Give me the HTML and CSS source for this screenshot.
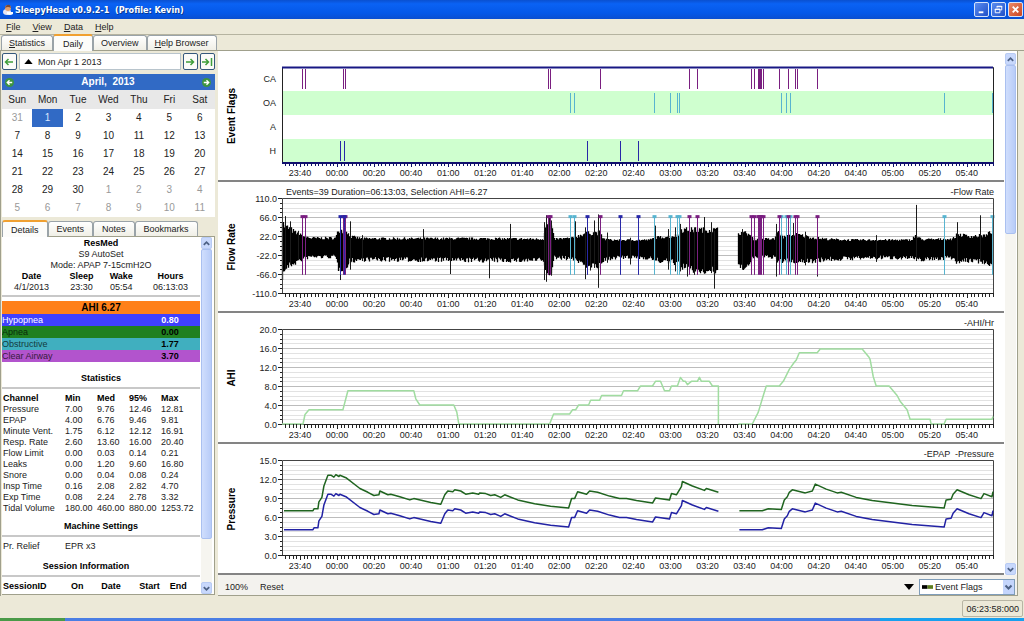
FILE: index.html
```html
<!DOCTYPE html>
<html lang="en">
<head>
    <meta charset="UTF-8">
    <meta name="viewport" content="width=device-width, initial-scale=1.0">
    <title>SleepyHead v0.9.2-1</title>
    <link rel="stylesheet" href="styles.css">
</head>
<body>
    <header class="titlebar">
        <svg class="app-icon" viewBox="0 0 12 12">
            <ellipse cx="5" cy="8" rx="4" ry="3" fill="#e8e4f0"/>
            <circle cx="6" cy="4" r="3" fill="#e0a070"/>
            <path d="M3 4 Q4 0 8 1 L9 4 Q6 2 3 4Z" fill="#7a4a38"/>
            <path d="M5 8h6v2q-3 2-6 0z" fill="#fff"/>
        </svg>
        <h1>SleepyHead v0.9.2-1 &nbsp;(Profile: Kevin)</h1>
        <div class="window-buttons">
            <button class="win-btn" aria-label="Minimize"><svg viewBox="0 0 14 14"><path d="M4 10h5" stroke="#fff" stroke-width="2"/></svg></button>
            <button class="win-btn" aria-label="Restore"><svg viewBox="0 0 14 14" fill="none" stroke="#fff"><path d="M5.5 5V3.500h5v4H9M5 4h6"/><path d="M3.500 6.500h5v4h-5zM3 7h6"/></svg></button>
            <button class="win-btn close" aria-label="Close"><svg viewBox="0 0 14 14"><path d="M4 4l6 6M10 4l-6 6" stroke="#fff" stroke-width="2"/></svg></button>
        </div>
    </header>

    <nav class="menubar">
        <button><u>F</u>ile</button>
        <button><u>V</u>iew</button>
        <button><u>D</u>ata</button>
        <button><u>H</u>elp</button>
    </nav>

    <div class="tabs main-tabs">
        <button class="tab"><u>S</u>tatistics</button>
        <button class="tab active">Daily</button>
        <button class="tab">Overview</button>
        <button class="tab"><u>H</u>elp Browser</button>
    </div>

    <div class="workspace">
        <aside class="sidebar">
            <div class="date-nav">
                <button class="nav-btn" aria-label="Previous day"><svg viewBox="0 0 12 12"><path d="M10 6H3M5.500 3L2.500 6l3 3" fill="none" stroke="#3f9e3a" stroke-width="1.500"/></svg></button>
                <button class="date-btn"><svg viewBox="0 0 10 6"><path d="M0 6L5 0l5 6z"/></svg>Mon Apr 1 2013</button>
                <button class="nav-btn" aria-label="Next day"><svg viewBox="0 0 12 12"><path d="M2 6h7M6.500 3l3 3-3 3" fill="none" stroke="#3f9e3a" stroke-width="1.500"/></svg></button>
                <button class="nav-btn" aria-label="Last day"><svg viewBox="0 0 12 12"><path d="M1 6h6M4.500 3l3 3-3 3M10.500 2v8" fill="none" stroke="#3f9e3a" stroke-width="1.500"/></svg></button>
            </div>

            <div class="calendar-head">
                <button aria-label="Previous month"><svg viewBox="0 0 10 10"><circle cx="5" cy="5" r="5" fill="#3d9440"/><path d="M8 5H3M5 2.500L2.500 5 5 7.500" fill="none" stroke="#fff" stroke-width="1.500"/></svg></button>
                <span>April, &nbsp;2013</span>
                <button aria-label="Next month"><svg viewBox="0 0 10 10"><circle cx="5" cy="5" r="5" fill="#3d9440"/><path d="M2 5h5M5 2.500L7.500 5 5 7.500" fill="none" stroke="#fff" stroke-width="1.500"/></svg></button>
            </div>
            <table class="calendar">
                <thead>
                    <tr><th>Sun</th><th>Mon</th><th>Tue</th><th>Wed</th><th>Thu</th><th>Fri</th><th>Sat</th></tr>
                </thead>
                <tbody>
                    <tr><td class="other">31</td><td class="selected">1</td><td>2</td><td>3</td><td>4</td><td>5</td><td>6</td></tr>
                    <tr><td>7</td><td>8</td><td>9</td><td>10</td><td>11</td><td>12</td><td>13</td></tr>
                    <tr><td>14</td><td>15</td><td>16</td><td>17</td><td>18</td><td>19</td><td>20</td></tr>
                    <tr><td>21</td><td>22</td><td>23</td><td>24</td><td>25</td><td>26</td><td>27</td></tr>
                    <tr><td>28</td><td>29</td><td>30</td><td class="other">1</td><td class="other">2</td><td class="other">3</td><td class="other">4</td></tr>
                    <tr><td class="other">5</td><td class="other">6</td><td class="other">7</td><td class="other">8</td><td class="other">9</td><td class="other">10</td><td class="other">11</td></tr>
                </tbody>
            </table>

            <div class="tabs detail-tabs">
                <button class="tab active">Details</button>
                <button class="tab">Events</button>
                <button class="tab">Notes</button>
                <button class="tab">Bookmarks</button>
            </div>
            <div class="details">
                <div class="details-body">
                    <div class="machine">
                        <b>ResMed</b>
                        <span>S9 AutoSet</span>
                        <span>Mode: APAP 7-15cmH2O</span>
                    </div>
                    <table class="night">
                        <tr><th>Date</th><th>Sleep</th><th>Wake</th><th>Hours</th></tr>
                        <tr><td>4/1/2013</td><td>23:30</td><td>05:54</td><td>06:13:03</td></tr>
                    </table>
                    <hr>
                    <div class="ahi">AHI 6.27</div>
                    <table class="indices">
                        <tr class="hypopnea"><td>Hypopnea</td><th>0.80</th></tr>
                        <tr class="apnea"><td>Apnea</td><th>0.00</th></tr>
                        <tr class="obstructive"><td>Obstructive</td><th>1.77</th></tr>
                        <tr class="clear-airway"><td>Clear Airway</td><th>3.70</th></tr>
                    </table>

                    <h2 class="first">Statistics</h2>
                    <hr>
                    <table class="stats">
                        <tr><th>Channel</th><th>Min</th><th>Med</th><th>95%</th><th>Max</th></tr>
                        <tr><td>Pressure</td><td>7.00</td><td>9.76</td><td>12.46</td><td>12.81</td></tr>
                        <tr><td>EPAP</td><td>4.00</td><td>6.76</td><td>9.46</td><td>9.81</td></tr>
                        <tr><td>Minute Vent.</td><td>1.75</td><td>6.12</td><td>12.12</td><td>16.91</td></tr>
                        <tr><td>Resp. Rate</td><td>2.60</td><td>13.60</td><td>16.00</td><td>20.40</td></tr>
                        <tr><td>Flow Limit</td><td>0.00</td><td>0.03</td><td>0.14</td><td>0.21</td></tr>
                        <tr><td>Leaks</td><td>0.00</td><td>1.20</td><td>9.60</td><td>16.80</td></tr>
                        <tr><td>Snore</td><td>0.00</td><td>0.04</td><td>0.08</td><td>0.24</td></tr>
                        <tr><td>Insp Time</td><td>0.16</td><td>2.08</td><td>2.82</td><td>4.70</td></tr>
                        <tr><td>Exp Time</td><td>0.08</td><td>2.24</td><td>2.78</td><td>3.32</td></tr>
                        <tr><td>Tidal Volume</td><td>180.00</td><td>460.00</td><td>880.00</td><td>1253.72</td></tr>
                    </table>

                    <h2>Machine Settings</h2>
                    <hr>
                    <table class="stats">
                        <tr><td>Pr. Relief</td><td>EPR x3</td></tr>
                    </table>

                    <h2 class="sessions-title">Session Information</h2>
                    <hr>
                    <table class="sessions">
                        <tr><th>SessionID</th><th>On</th><th>Date</th><th>Start</th><th>End</th></tr>
                    </table>
                </div>
                <div class="scrollbar">
                    <button aria-label="Scroll up"><svg viewBox="0 0 10 10"><path d="M2 6.500L5 3.500l3 3" fill="none" stroke="#4d6185" stroke-width="2"/></svg></button>
                    <div class="track"><div class="thumb details-thumb"></div></div>
                    <button aria-label="Scroll down"><svg viewBox="0 0 10 10"><path d="M2 3.500L5 6.500l3-3" fill="none" stroke="#4d6185" stroke-width="2"/></svg></button>
                </div>
            </div>
        </aside>

        <main class="graphs">
            <div class="graph-area">
                <div class="graph-list">
                    <svg class="graph" id="eventFlags"></svg>
                    <svg class="graph" id="flowRate"></svg>
                    <svg class="graph" id="ahi"></svg>
                    <svg class="graph" id="pressure"></svg>
                </div>
                <div class="scrollbar">
                    <button aria-label="Scroll up"><svg viewBox="0 0 10 10"><path d="M2 6.500L5 3.500l3 3" fill="none" stroke="#4d6185" stroke-width="2"/></svg></button>
                    <div class="track"><div class="thumb graphs-thumb"></div></div>
                    <button aria-label="Scroll down"><svg viewBox="0 0 10 10"><path d="M2 3.500L5 6.500l3-3" fill="none" stroke="#4d6185" stroke-width="2"/></svg></button>
                </div>
            </div>
            <div class="graph-toolbar">
                <button>100%</button>
                <button>Reset</button>
                <button class="drop" aria-label="Graph list"><svg viewBox="0 0 10 6"><path d="M0 0h10L5 6z"/></svg></button>
                <div class="graph-select">
                    <svg class="swatch" viewBox="0 0 12 4"><path d="M0 0h6v4H0z"/><path d="M6 0h6v4H6z" fill="#5d7d1e"/></svg>
                    <select aria-label="Visible graph"><option>Event Flags</option></select>
                    <svg class="arrow" viewBox="0 0 10 14"><path d="M2 5.500l3 3 3-3" fill="none" stroke="#4d6185" stroke-width="2"/></svg>
                </div>
            </div>
        </main>
    </div>

    <footer class="statusbar"><span class="clock">06:23:58:000</span></footer>
    <div class="taskbar"><span class="start"></span><span class="tray"></span></div>

    <script src="graphs.js"></script>
</body>
</html>
```
FILE: styles.css
```css
* { box-sizing: border-box; }
body {
    margin: 0;
    height: 100vh;
    display: flex;
    flex-direction: column;
    overflow: hidden;
    background-color: #ece9d8;
    color: #222;
    font-family: "Liberation Sans", Arial, sans-serif;
    font-size: 9px;
    line-height: 12px;
}
button { font: inherit; color: inherit; background: none; border: none; padding: 0; }
svg { display: block; }
table { border-collapse: collapse; width: 100%; }
th, td { padding: 0; }

/* window frame */
.titlebar {
    flex: none;
    height: 19px;
    display: flex;
    align-items: center;
    padding: 0 1px 0 2px;
    background: linear-gradient(#0a50d0, #0a62f4 20%, #0458e8 70%, #0a4fd0);
    color: #fff;
}
.app-icon { width: 12px; height: 12px; margin-right: 1px; }
.titlebar h1 {
    margin: 0;
    flex: 1;
    font-family: "DejaVu Sans Condensed", "DejaVu Sans", sans-serif;
    font-size: 9px;
    text-shadow: 1px 1px 0 #0a3a90;
}
.window-buttons { display: flex; gap: 2px; }
.win-btn { width: 15px; height: 15px; border: 1px solid #d5e3fa; border-radius: 2px; background: linear-gradient(135deg, #5a8cf0, #1f50c8); }
.win-btn.close { background: linear-gradient(135deg, #ec8a68, #cc4520); }

.menubar { flex: none; height: 16px; display: flex; gap: 12px; padding-left: 6px; border-bottom: 1px solid #b5b3a0; }

/* tabs */
.tabs { flex: none; display: flex; align-items: flex-end; padding-left: 1px; border-bottom: 1px solid #a0a08c; }
.tab { height: 15px; padding: 0 7px; border: 1px solid #9aa3a8; border-bottom: none; border-radius: 3px 3px 0 0; background: linear-gradient(#fff, #f0efe6); }
.tab.active { height: 17px; margin-bottom: -1px; background: #fcfcfa; border-top: 2px solid #f0a030; }
.main-tabs { height: 16px; }
.main-tabs .tab { padding: 0 7px; }
.main-tabs .tab.active { padding: 0 9px; }

.workspace { flex: 1; min-height: 0; display: flex; padding-right: 6px; }

/* sidebar */
.sidebar { flex: none; width: 218px; display: flex; flex-direction: column; border-left: 1px solid #a0a08c; padding: 2px 3px 1px 1px; }
.date-nav { display: flex; gap: 2px; height: 17px; }
.nav-btn { width: 15px; border: 1px solid #35587c; border-radius: 2px; background: #fbfbf8; }
.nav-btn svg { width: 12px; }
.date-btn { flex: 1; display: flex; align-items: center; gap: 5px; padding-left: 4px; border: 1px solid #b8c4cc; background: #fff; }
.date-btn svg { width: 9px; height: 5px; }
.calendar-head { display: flex; align-items: center; justify-content: space-between; height: 16px; margin-top: 4px; padding: 0 4px 0 3px; background: #316ac5; color: #fff; font-size: 10px; font-weight: bold; }
.calendar-head svg { width: 9px; height: 9px; }
.calendar { table-layout: fixed; background: #fff; text-align: center; font-size: 10px; }
.calendar th { height: 19px; background: #e8e8e8; font-weight: normal; }
.calendar td { height: 18px; }
.calendar .other { color: #999; }
.calendar .selected { background: #316ac5; color: #dbe6ff; }

.detail-tabs { height: 17px; margin-top: 3px; padding-left: 0; }
.detail-tabs .tab { padding: 0 8px; }
.details { flex: 1; min-height: 0; display: flex; border: 1px solid #a0a08c; border-width: 0 1px 1px 0; background: #fff; padding-right: 2px; }
.details-body { flex: 1; min-width: 0; overflow: hidden; padding: 1px 1px 0 0; line-height: 11px; }
.details hr { margin: 0; border: none; height: 2px; background: #c8c8c8; }
.details b, .details th, .details h2, .ahi { color: #000; }
.machine { display: flex; flex-direction: column; align-items: center; }
.night { text-align: center; margin-bottom: 2px; }
.ahi { margin-top: 4px; height: 13px; line-height: 13px; background: #ff8019; text-align: center; font-size: 10px; font-weight: bold; }
.indices { line-height: 12px; }
.indices th { width: 60px; }
.indices .hypopnea, .indices .hypopnea th { background: #4040ff; color: #fff; }
.apnea { background: #208020; color: #0a2a0a; }
.obstructive { background: #40afbf; color: #143a40; }
.clear-airway { background: #b254cd; color: #381a40; }
.details h2 { margin: 7px 0 3px; font-size: 9px; text-align: center; }
.details h2.first { margin-top: 11px; }
.details h2.sessions-title { padding-right: 30px; margin-top: 9px; }
.stats, .sessions { margin-top: 4px; table-layout: fixed; text-align: left; }
.stats tr > :nth-child(1) { width: 62px; }
.stats td, .stats th { padding-left: 1px; white-space: nowrap; }
.stats tr > :nth-child(5) { width: 40px; }
.sessions tr > :nth-child(1) { width: 69px; padding-left: 1px; }
.sessions tr > :nth-child(3) { width: 38px; }

/* scrollbars */
.scrollbar { flex: none; width: 11px; display: flex; flex-direction: column; background: #f6f5f0; }
.scrollbar button { flex: none; height: 12px; border: 1px solid #b8cbf4; border-radius: 2px; background: #c8d8fc; }
.track { flex: 1; min-height: 0; }
.thumb { border: 1px solid #aac0f0; border-radius: 2px; background: linear-gradient(90deg, #d0defd, #b8ccf8); }
.details-thumb { height: 87%; }
.graphs-thumb { height: 34%; }

/* graphs */
.graphs { flex: 1; min-width: 0; display: flex; flex-direction: column; background: #fff; border: 1px solid #a0a08c; border-width: 0 1px 1px 0; }
.graph-area { flex: 1; min-height: 0; display: flex; padding-right: 1px; }
.graph-list { flex: 1; min-width: 0; overflow: hidden; }
.graph-area .scrollbar { margin: 2px 0 0 1px; }
.graph { width: 100%; height: 131px; border-bottom: 2px solid #848484; }
.graph text { font-size: 10px; fill: #222; }
.graph .tick { font-size: 9px; }
.graph .name { font-weight: bold; fill: #000; text-anchor: middle; }
.graph .end { text-anchor: end; }
.graph .mid { text-anchor: middle; }
.graph-toolbar { flex: none; height: 20px; display: flex; align-items: center; gap: 12px; padding: 3px 2px 0 7px; background: #f3f2ee; }
.drop { margin-left: auto; }
.drop svg { width: 10px; height: 6px; }
.graph-select { position: relative; width: 96px; margin-left: -7px; }
.graph-select select { appearance: none; display: block; width: 100%; height: 16px; padding: 0 15px; border: 1px solid #7f9db9; border-radius: 0; background: #fff; color: inherit; font: inherit; }
.graph-select svg { position: absolute; pointer-events: none; }
.graph-select .swatch { left: 3px; top: 6px; width: 11px; height: 4px; }
.graph-select .arrow { right: 1px; top: 1px; width: 11px; height: 14px; background: #c4d5fc; }

.statusbar { flex: none; height: 22px; display: flex; justify-content: flex-end; align-items: center; padding: 3px 1px 0 0; }
.clock { padding: 2px 3px 1px; border: 1px solid #b8b5a4; border-radius: 2px; }
.taskbar { flex: none; height: 3px; display: flex; justify-content: space-between; background: #4a7ee4; }
.taskbar .start { width: 65px; background: #4a9a48; }
.taskbar .tray { width: 144px; background: #18a0ee; }
```
FILE: graphs.js
```js
const NS = 'http://www.w3.org/2000/svg';
const LEFT = 64, RIGHT = 11, TOP = 16, BOTTOM = 111;
const SPAN = 712; // length of the night in data units

const COLORS = { CA: '#7a1f80', OA: '#58b4d0', H: '#2828a8' };
const events = {
    CA: [21, 24, 62, 64, 267, 269, 319, 408, 416, 470, 473, 477, 478, 479, 480, 482, 498, 507, 514, 516, 536],
    OA: [289, 293, 373, 389, 396, 398, 500, 505, 509, 663, 711],
    H: [59, 63, 306, 339, 357]
};

function add(svg, tag, attrs, text) {
    const el = document.createElementNS(NS, tag);
    for (const k in attrs) el.setAttribute(k, attrs[k]);
    if (text !== undefined) el.textContent = text;
    svg.appendChild(el);
    return el;
}

function px(svg, u) {
    return LEFT + u / SPAN * (svg.clientWidth - LEFT - RIGHT);
}

function line(svg, x1, y1, x2, y2, stroke, width) {
    add(svg, 'path', { d: `M${x1} ${y1}L${x2} ${y2}`, stroke, 'stroke-width': width || 1, fill: 'none' });
}

function timeAxis(svg, color) {
    let d = '';
    for (let i = -4; i <= 187; i++) {
        const x = Math.round(px(svg, 18 + i * 3.71)) + 0.5;
        d += `M${x} ${BOTTOM}v${i % 10 === 0 ? 5 : 4}`;
    }
    add(svg, 'path', { d, stroke: color, fill: 'none' });
    for (let i = 0; i < 19; i++) {
        const min = (23 * 60 + 40 + i * 20) % 1440;
        const label = String(Math.floor(min / 60)).padStart(2, '0') + ':' + String(min % 60).padStart(2, '0');
        add(svg, 'text', { x: px(svg, 18 + i * 37.1), y: 125, class: 'tick mid' }, label);
    }
}

function name(svg, text) {
    add(svg, 'text', { transform: 'translate(17 65) rotate(-90)', class: 'name' }, text);
}

function valueAxis(svg, min, max, minor, major, legend) {
    const y = v => BOTTOM - (v - min) / (max - min) * (BOTTOM - TOP);
    const right = px(svg, SPAN);
    for (let i = 0; i <= minor * major; i++) {
        const yy = Math.round(TOP + i * (BOTTOM - TOP) / (minor * major)) + 0.5;
        const big = i % minor === 0;
        line(svg, LEFT, yy, right, yy, big ? '#bcbcbc' : '#e2e2e2');
        line(svg, LEFT - (big ? 4 : 2), yy, LEFT, yy, '#222');
        if (big) {
            const v = max - (max - min) * i / (minor * major);
            add(svg, 'text', { x: LEFT - 5, y: yy + 3, class: 'tick end' }, v.toFixed(1));
        }
    }
    add(svg, 'text', { x: right + 1, y: 13, class: 'tick end' }, legend);
    return y;
}

function frame(svg, color, side) {
    const right = Math.round(px(svg, SPAN)) + 0.5;
    add(svg, 'path', { d: `M${LEFT + 0.5} ${BOTTOM + 0.5}V${TOP + 0.5}H${right}V${BOTTOM + 0.5}`, fill: 'none', stroke: side });
    line(svg, LEFT, BOTTOM + 0.5, right, BOTTOM + 0.5, color);
}

function drawFlags(svg) {
    name(svg, 'Event Flags');
    const right = px(svg, SPAN);
    ['CA', 'OA', 'A', 'H'].forEach((k, i) => {
        const top = TOP + i * 24;
        if (i % 2) add(svg, 'rect', { x: LEFT, y: top, width: right - LEFT, height: 24, fill: '#cfffcf' });
        add(svg, 'text', { x: LEFT - 6, y: top + 15, class: 'tick end' }, k);
        (events[k] || []).forEach(u => {
            const x = Math.floor(px(svg, u)) + 0.5;
            line(svg, x, top + 2, x, top + 22, COLORS[k]);
        });
    });
    frame(svg, '#10106c', '#222');
    line(svg, LEFT, TOP + 0.5, right, TOP + 0.5, '#181884', 2);
    line(svg, LEFT, BOTTOM + 1, right, BOTTOM + 1, '#10106c', 2);
    timeAxis(svg, '#10106c');
}

// breathing envelope: position, inhale, exhale
const envelope = [
    [0, 58, -70], [3, 42, -55], [9, 36, -45], [15, 26, -38], [22, 20, -30], [30, 16, -26], [54, 16, -26],
    [57, 32, -52], [65, 34, -52], [68, 20, -36], [80, 15, -32], [200, 15, -34], [262, 14, -34], [264, 46, -64],
    [270, 42, -60], [273, 14, -28], [292, 16, -30], [303, 26, -44], [318, 28, -48], [322, 14, -36],
    [330, 12, -28], [368, 12, -28], [374, 17, -34], [397, 22, -40], [400, 34, -48], [416, 34, -58], [437, 34, -60]
];
const envelope2 = [
    [457, 28, -52], [467, 26, -46], [472, 14, -28], [493, 14, -26], [496, 30, -38], [502, 18, -36], [516, 24, -36],
    [528, 18, -36], [545, 14, -32], [567, 12, -30], [590, 12, -28], [630, 12, -28], [634, 22, -32], [640, 13, -32],
    [671, 14, -28], [676, 24, -38], [690, 20, -34], [705, 22, -38], [711, 32, -46]
];
const spikes = [
    [1, 78, -100], [4, 68, -56], [9, 56, -44], [17, 34, -34], [59, 36, -80], [62, 62, -60], [69, 56, -56],
    [81, 24, -36], [142, 38, -30], [169, 14, -66], [208, 14, -76], [229, 50, -30], [263, 54, -80], [265, 70, -84],
    [268, 66, -66], [270, 58, -70], [294, 56, -28], [304, 42, -78], [309, 26, -58], [313, 58, -52], [317, 72, -98],
    [326, 30, -40], [349, 18, -44], [374, 46, -32], [387, 38, -56], [394, 42, -60], [399, 50, -60], [406, 34, -72],
    [413, 42, -68], [423, 66, -56], [430, 54, -64], [433, 34, -100], [461, 38, -56], [495, 50, -72],
    [512, 52, -40], [524, 32, -46], [536, 60, -72], [595, 24, -38], [635, 94, -36], [676, 54, -36], [699, 70, -36], [711, 64, -50]
];

function drawFlow(svg) {
    name(svg, 'Flow Rate');
    const y = valueAxis(svg, -110, 110, 4, 5, '-Flow Rate');
    let seed = 7;
    const rand = () => (seed = (seed * 16807) % 2147483647) / 2147483647;
    let d = '';
    [envelope, envelope2].forEach(env => {
        for (let i = 0; i < env.length - 1; i++) {
            const [a, at, ab] = env[i], [b, bt, bb] = env[i + 1];
            for (let u = a; u < b; u++) {
                const f = (u - a) / (b - a);
                const k = 0.86 + rand() * 0.4, m = 0.82 + rand() * 0.35;
                const x = Math.floor(px(svg, u)) + 0.5;
                d += `M${x} ${y((at + (bt - at) * f) * k)}V${y((ab + (bb - ab) * f) * m)}`;
            }
        }
    });
    add(svg, 'path', { d, stroke: '#000', 'stroke-width': 1.3, fill: 'none' });
    spikes.forEach(([u, hi, lo]) => {
        const x = Math.floor(px(svg, u)) + 0.5;
        line(svg, x, y(hi), x, y(lo), '#1a1a1a');
    });
    ['OA', 'CA', 'H'].forEach(k => events[k].forEach(u => {
        const x = Math.floor(px(svg, u)) + 0.5;
        line(svg, x, y(68), x, y(-68), COLORS[k]);
        add(svg, 'rect', { x: x - 2, y: y(68) - 1, width: 4, height: 3, fill: COLORS[k] });
    }));
    frame(svg, '#222', '#444');
    add(svg, 'text', { x: LEFT + 4, y: 13, class: 'tick' }, 'Events=39 Duration=06:13:03, Selection AHI=6.27');
    timeAxis(svg, '#222');
}

function curve(svg, y, data, color, offset, width) {
    const d = data.map(([u, v], i) => (i ? 'L' : 'M') + px(svg, u).toFixed(1) + ' ' + y(v + offset).toFixed(1)).join('');
    add(svg, 'path', { d, stroke: color, 'stroke-width': width, fill: 'none', 'stroke-linejoin': 'round' });
}

const ahi = [
    [0, 0], [21, 0], [23, 2], [27, 3], [61, 3], [66, 7], [132, 7], [134, 5.3], [138, 4], [172, 4], [175, 2.5], [177, 0],
    [268, 0], [272, 2.1], [288, 2.1], [291, 3], [294, 3], [297, 4], [307, 4], [309, 5], [318, 5], [320, 6], [340, 6],
    [342, 7], [356, 7], [359, 8], [371, 8], [374, 9], [379, 9], [383, 7], [388, 7], [390, 8], [396, 8], [399, 9.8],
    [402, 9], [404, 9], [406, 8.3], [410, 9], [416, 9], [418, 9.8], [420, 9], [428, 9], [431, 8], [437, 8], [437, 0]
];
const ahi2 = [
    [457, 0], [471, 0], [477, 2.5], [482, 6], [485, 8], [498, 8], [502, 9], [508, 11.5], [513, 13], [515, 13.5], [518, 15],
    [536, 15], [539, 15.8], [581, 15.8], [588, 14], [589, 13.5], [592, 10], [595, 8], [608, 8], [616, 6], [619, 4.8],
    [626, 3], [629, 1], [649, 1], [650, 0], [663, 0], [665, 1], [711, 1], [712, 1.6]
];

function drawAhi(svg) {
    name(svg, 'AHI');
    const y = valueAxis(svg, 0, 20, 4, 5, '-AHI/Hr');
    frame(svg, '#222', '#444');
    curve(svg, y, ahi, '#a0dca0', 0, 1.5);
    curve(svg, y, ahi2, '#a0dca0', 0, 1.5);
    timeAxis(svg, '#222');
}

const pressure = [
    [2, 7], [31, 7], [32, 7.3], [36, 7.3], [37, 8.4], [40, 9.1], [42, 10.9], [46, 12.6], [49, 12.6], [52, 12.3], [54, 12.7],
    [57, 12.4], [58, 12.6], [64, 12.2], [78, 10.5], [86, 9.9], [92, 9.4], [97, 9.5], [98, 10.1], [106, 9.5], [109, 9.6],
    [118, 9.2], [128, 8.7], [132, 8.9], [149, 8.3], [159, 8], [163, 9.5], [166, 10.1], [171, 10], [173, 10.3], [179, 10.1],
    [184, 9.6], [191, 9.8], [197, 9.6], [198, 9.8], [204, 9.7], [209, 9.4], [213, 9.5], [219, 9.1], [223, 9.5], [236, 8.7],
    [253, 8.1], [269, 7.7], [287, 7.4], [290, 8.9], [293, 8.9], [296, 10], [305, 9.6], [308, 10.1], [316, 9.9], [328, 9.3],
    [338, 8.9], [345, 8.9], [355, 8.6], [371, 8.2], [374, 9], [388, 8.7], [390, 9.7], [395, 9.5], [400, 10.8], [401, 11.6],
    [411, 10.9], [423, 10.2], [425, 10.5], [437, 9.9]
];
const pressure2 = [
    [458, 7], [481, 7], [487, 7.3], [500, 7.2], [503, 8.7], [506, 9.2], [508, 9.9], [511, 10.3], [524, 9.8], [531, 10.1],
    [534, 11.2], [545, 10.4], [556, 9.8], [560, 9.9], [575, 9.1], [591, 8.6], [611, 8.2], [631, 7.8], [663, 7.4], [665, 8.7],
    [670, 8.8], [672, 9.6], [676, 10.3], [688, 9.5], [700, 8.9], [703, 9.7], [711, 9.2], [712, 10]
];

function drawPressure(svg) {
    name(svg, 'Pressure');
    const y = valueAxis(svg, 0, 15, 4, 5, '-EPAP \u00a0-Pressure');
    frame(svg, '#222', '#444');
    [pressure, pressure2].forEach(p => {
        curve(svg, y, p, '#1f641f', 0, 1.5);
        curve(svg, y, p, '#2222a4', -3, 1.5);
    });
    timeAxis(svg, '#222');
}

function drawAll() {
    const graphs = { eventFlags: drawFlags, flowRate: drawFlow, ahi: drawAhi, pressure: drawPressure };
    for (const id in graphs) {
        const svg = document.getElementById(id);
        svg.replaceChildren();
        graphs[id](svg);
    }
}

window.addEventListener('resize', drawAll);
drawAll();
```
